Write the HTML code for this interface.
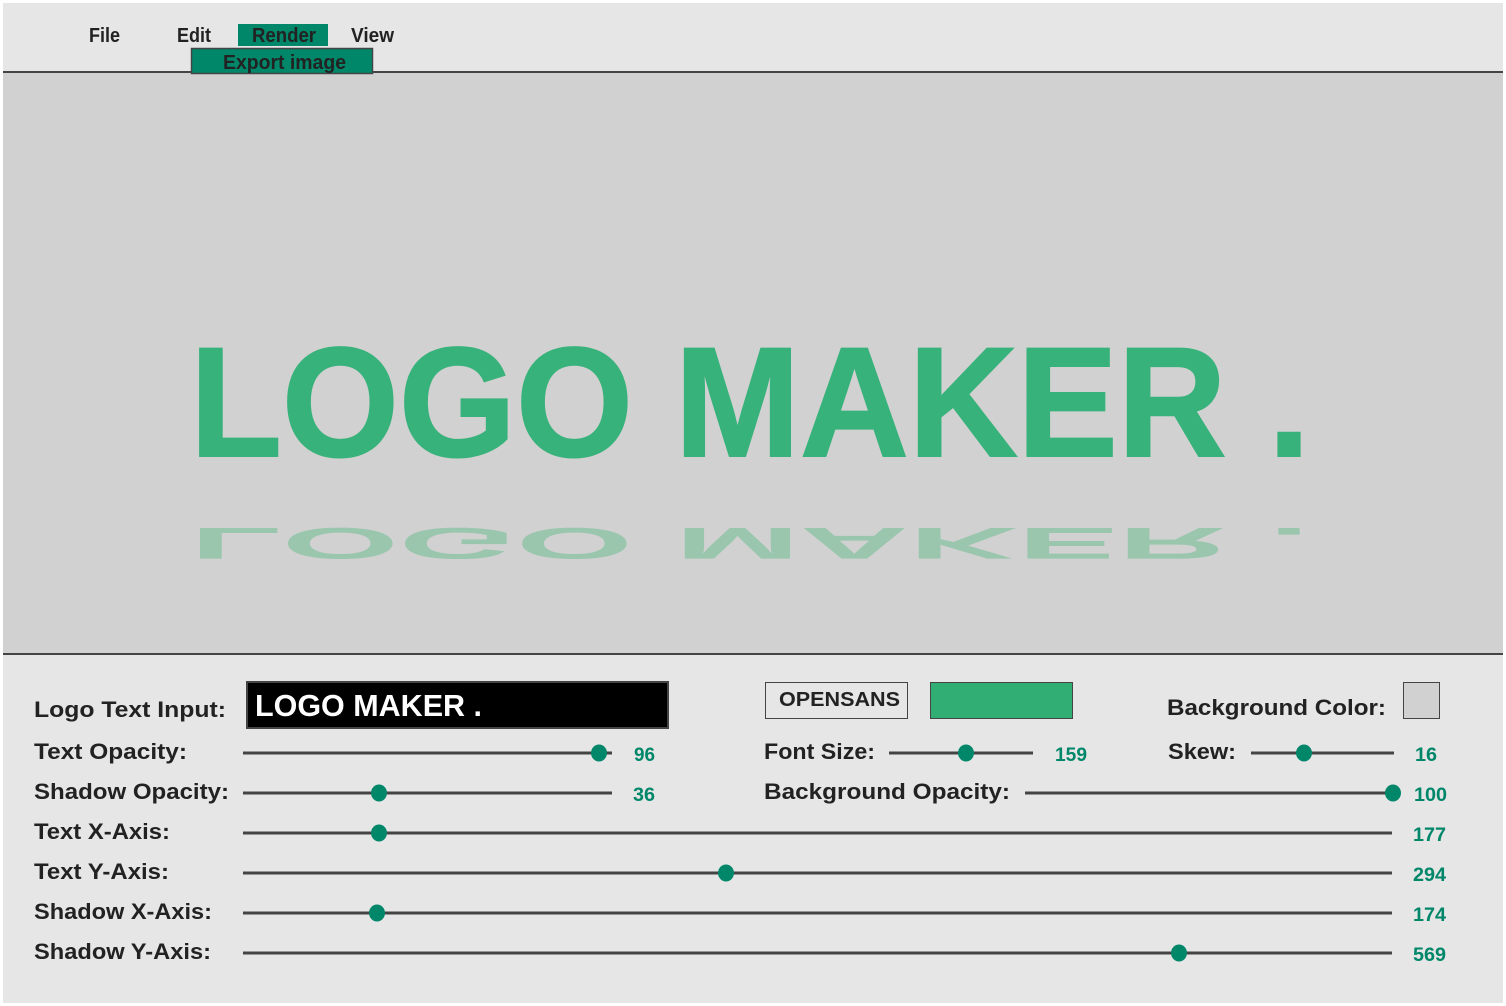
<!DOCTYPE html>
<html><head><meta charset="utf-8"><style>
html,body{margin:0;padding:0;background:#fff;}
svg{display:block;}
text{font-family:"Liberation Sans",sans-serif;font-weight:bold;}
</style></head><body>
<svg width="1506" height="1006" viewBox="0 0 1506 1006" xmlns="http://www.w3.org/2000/svg">
<rect x="3" y="3" width="1500" height="1000" fill="#e6e6e6"/>
<rect x="3" y="73" width="1500" height="580" fill="#d1d1d1"/>
<rect x="3" y="71" width="1500" height="2" fill="#444"/>
<rect x="3" y="653" width="1500" height="2" fill="#444"/>
<g fill="#222" font-size="20">
<text x="89" y="42" textLength="31" lengthAdjust="spacingAndGlyphs">File</text>
<text x="177" y="42" textLength="34" lengthAdjust="spacingAndGlyphs">Edit</text>
<rect x="238" y="24" width="90" height="22" fill="#00876a"/>
<text x="252" y="42" textLength="64" lengthAdjust="spacingAndGlyphs">Render</text>
<text x="351" y="42" textLength="43" lengthAdjust="spacingAndGlyphs">View</text>
<rect x="191.5" y="48.5" width="181" height="25" fill="#00876a" stroke="#444" stroke-width="1.5"/>
<text x="223" y="69" textLength="123" lengthAdjust="spacingAndGlyphs">Export image</text>
</g>
<text x="190" y="456" font-size="156" fill="#38b27b" stroke="#38b27b" stroke-width="2" textLength="1120" lengthAdjust="spacingAndGlyphs">LOGO MAKER .</text>
<g transform="translate(0,528) scale(1,-0.285)">
<text x="190" y="0" font-size="156" fill="#9ac6ae" textLength="1120" lengthAdjust="spacingAndGlyphs">LOGO MAKER .</text>
</g>
<g fill="#222" font-size="22">
<text x="34" y="717" textLength="192" lengthAdjust="spacingAndGlyphs">Logo Text Input:</text>
<text x="34" y="759" textLength="153" lengthAdjust="spacingAndGlyphs">Text Opacity:</text>
<text x="34" y="799" textLength="195" lengthAdjust="spacingAndGlyphs">Shadow Opacity:</text>
<text x="34" y="839" textLength="136" lengthAdjust="spacingAndGlyphs">Text X-Axis:</text>
<text x="34" y="879" textLength="135" lengthAdjust="spacingAndGlyphs">Text Y-Axis:</text>
<text x="34" y="919" textLength="178" lengthAdjust="spacingAndGlyphs">Shadow X-Axis:</text>
<text x="34" y="959" textLength="177" lengthAdjust="spacingAndGlyphs">Shadow Y-Axis:</text>
<text x="764" y="759" textLength="111" lengthAdjust="spacingAndGlyphs">Font Size:</text>
<text x="764" y="799" textLength="246" lengthAdjust="spacingAndGlyphs">Background Opacity:</text>
<text x="1168" y="759" textLength="68" lengthAdjust="spacingAndGlyphs">Skew:</text>
<text x="1167" y="715" textLength="219" lengthAdjust="spacingAndGlyphs">Background Color:</text>
</g>
<rect x="247" y="682" width="421" height="46" fill="#000" stroke="#444" stroke-width="2"/>
<text x="255" y="716" font-size="31" fill="#fff" textLength="227" lengthAdjust="spacingAndGlyphs">LOGO MAKER .</text>
<rect x="765.5" y="682.5" width="142" height="36" fill="none" stroke="#444" stroke-width="1"/>
<text x="779" y="706" font-size="20" fill="#222" textLength="121" lengthAdjust="spacingAndGlyphs">OPENSANS</text>
<rect x="930.5" y="682.5" width="142" height="36" fill="#31ae74" stroke="#444" stroke-width="1"/>
<rect x="1403.5" y="682.5" width="36" height="36" fill="#d1d1d1" stroke="#444" stroke-width="1"/>
<g stroke="#444" stroke-width="3">
<line x1="243" y1="753" x2="612" y2="753"/>
<line x1="243" y1="793" x2="612" y2="793"/>
<line x1="889" y1="753" x2="1033" y2="753"/>
<line x1="1251" y1="753" x2="1394" y2="753"/>
<line x1="1025" y1="793" x2="1393" y2="793"/>
<line x1="243" y1="833" x2="1392" y2="833"/>
<line x1="243" y1="873" x2="1392" y2="873"/>
<line x1="243" y1="913" x2="1392" y2="913"/>
<line x1="243" y1="953" x2="1392" y2="953"/>
</g>
<g fill="#00876a">
<ellipse cx="599" cy="753" rx="8" ry="8.5"/>
<ellipse cx="379" cy="793" rx="8" ry="8.5"/>
<ellipse cx="966" cy="753" rx="8" ry="8.5"/>
<ellipse cx="1304" cy="753" rx="8" ry="8.5"/>
<ellipse cx="1393" cy="793" rx="8" ry="8.5"/>
<ellipse cx="379" cy="833" rx="8" ry="8.5"/>
<ellipse cx="726" cy="873" rx="8" ry="8.5"/>
<ellipse cx="377" cy="913" rx="8" ry="8.5"/>
<ellipse cx="1179" cy="953" rx="8" ry="8.5"/>
</g>
<g fill="#00876a" font-size="19">
<text x="634" y="761" textLength="21" lengthAdjust="spacingAndGlyphs">96</text>
<text x="633" y="801" textLength="22" lengthAdjust="spacingAndGlyphs">36</text>
<text x="1055" y="761" textLength="32" lengthAdjust="spacingAndGlyphs">159</text>
<text x="1415" y="761" textLength="22" lengthAdjust="spacingAndGlyphs">16</text>
<text x="1414" y="801" textLength="33" lengthAdjust="spacingAndGlyphs">100</text>
<text x="1413" y="841" textLength="33" lengthAdjust="spacingAndGlyphs">177</text>
<text x="1413" y="881" textLength="33" lengthAdjust="spacingAndGlyphs">294</text>
<text x="1413" y="921" textLength="33" lengthAdjust="spacingAndGlyphs">174</text>
<text x="1413" y="961" textLength="33" lengthAdjust="spacingAndGlyphs">569</text>
</g>
</svg>
</body></html>
